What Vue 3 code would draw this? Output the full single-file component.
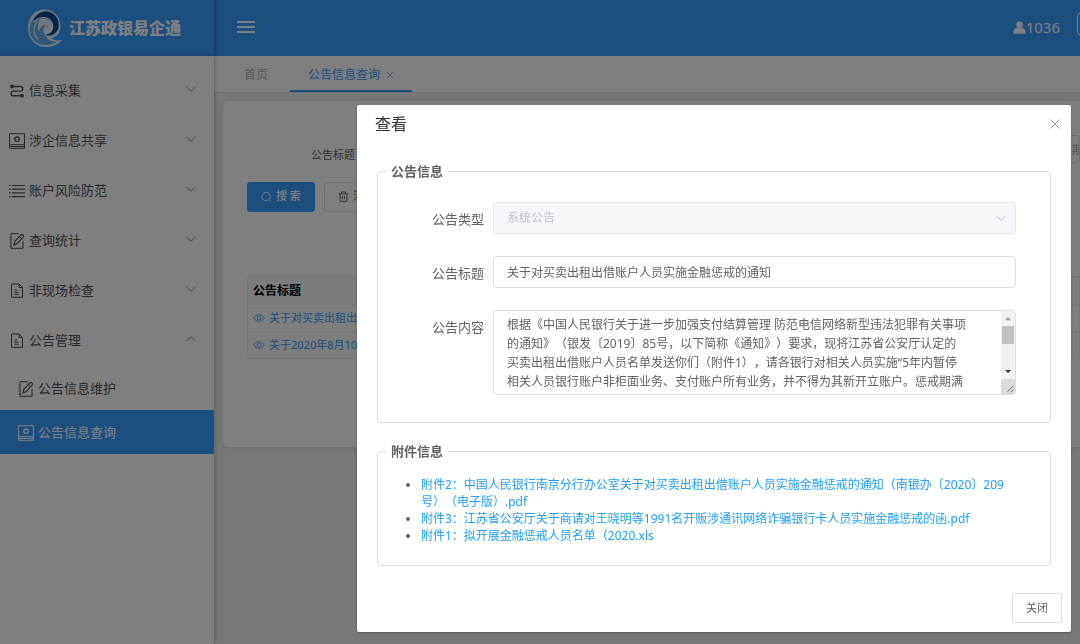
<script setup>
import { ref } from 'vue'

const menu = [
  { text: '信息采集', icon: 'route' },
  { text: '涉企信息共享', icon: 'screen' },
  { text: '账户风险防范', icon: 'list' },
  { text: '查询统计', icon: 'edit' },
  { text: '非现场检查', icon: 'doc' },
  { text: '公告管理', icon: 'doc', open: true },
]
const subMenu = [
  { text: '公告信息维护', icon: 'edit' },
  { text: '公告信息查询', icon: 'screen', active: true },
]
const notices = ['关于对买卖出租出借账户人员实施金融惩戒的通知', '关于2020年8月10日系统升级的通知']

const title = ref('关于对买卖出租出借账户人员实施金融惩戒的通知')
const content = ref(
  [
    '根据《中国人民银行关于进一步加强支付结算管理 防范电信网络新型违法犯罪有关事项',
    '的通知》（银发〔2019〕85号，以下简称《通知》）要求，现将江苏省公安厅认定的',
    '买卖出租出借账户人员名单发送你们（附件1），请各银行对相关人员实施“5年内暂停',
    '相关人员银行账户非柜面业务、支付账户所有业务，并不得为其新开立账户。惩戒期满',
  ].join('\n')
)
const files = [
  '附件2：中国人民银行南京分行办公室关于对买卖出租出借账户人员实施金融惩戒的通知（南银办〔2020〕209\n号）（电子版）.pdf',
  '附件3：江苏省公安厅关于商请对王晓明等1991名开贩涉通讯网络诈骗银行卡人员实施金融惩戒的函.pdf',
  '附件1：拟开展金融惩戒人员名单（2020.xls',
]
</script>

<template>
  <div class="shell">
    <svg class="defs" aria-hidden="true">
      <symbol id="route" viewBox="0 0 16 16">
        <g fill="none" stroke="currentColor" stroke-width="1.4">
          <path d="M4 3.5h7.5a2.3 2.3 0 0 1 0 4.6H4.300a2.300 2.300 0 0 0 0 4.600H12" />
        </g>
        <circle cx="3" cy="3.500" r="1.900" fill="currentColor" />
        <circle cx="13" cy="12.700" r="1.900" fill="currentColor" />
      </symbol>
      <symbol id="screen" viewBox="0 0 16 16">
        <g fill="none" stroke="currentColor">
          <path d="M.5 .7h15v11H.500zM.500 11.700v3.600h15v-3.600M.500 13.500h15" />
          <circle cx="8" cy="6.200" r="2.200" stroke-width="1.300" />
        </g>
      </symbol>
      <symbol id="list" viewBox="0 0 16 16">
        <path d="M3 2.500h13M3 6.200h13M3 9.900h13M3 13.600h13M0 2.500h1.500M0 6.200h1.500M0 9.900h1.500M0 13.600h1.500" stroke="currentColor" stroke-width="1.200" />
      </symbol>
      <symbol id="edit" viewBox="0 0 16 16">
        <g fill="none" stroke="currentColor">
          <path d="M10 .700H2v2M2 4.500v1.500M2 8v1.500M2 11.500v3.800h12V8M.500 4h2.500M.500 7h2.500M.500 10h2.500M.500 13h2.500" />
          <path d="M5 12l.800-3.600 5.800-6.300a1.600 1.600 0 0 1 2.500 2.100L8.200 10.600z" stroke-width="1.200" />
          <path d="M10.300 3.700l2.300 2" />
        </g>
      </symbol>
      <symbol id="doc" viewBox="0 0 16 16">
        <g fill="none" stroke="currentColor">
          <path d="M2.500 1h7.500l3.500 3.500v9.800H2.500zM10 1v3.500h3.500M5.500 7h2.500M5.500 9.200h4M5.500 11.300h4" />
        </g>
      </symbol>
      <symbol id="down" viewBox="0 0 12 12">
        <path d="M1.500 4l4.500 4.300L10.500 4" fill="none" stroke="currentColor" />
      </symbol>
      <symbol id="cross" viewBox="0 0 12 12">
        <path d="M1.500 1.500l9 9M10.500 1.500l-9 9" fill="none" stroke="currentColor" />
      </symbol>
      <symbol id="eye" viewBox="0 0 12 12">
        <g fill="none" stroke="currentColor" stroke-width=".8">
          <path d="M.800 6C3.300 1.500 8.700 1.500 11.200 6 8.700 10.500 3.300 10.500 .800 6z" />
          <circle cx="6" cy="6" r="1.900" />
        </g>
      </symbol>
    </svg>

    <header class="top">
      <div class="brand">
        <svg class="logo" viewBox="0 0 36 40">
          <path d="M17 1.500C7 1.500 1 10 1 20c0 11.500 8 19 18 19 6.500 0 12-2.500 16.500-7-4.500 1-8.500 .500-11-1.500 6.500-2 9.500-7 9-13.500C33 7.500 26 1.500 17 1.500z" fill="#fff" opacity=".85" />
          <path d="M9 8C3.500 13 1.500 20 3.500 26.500 6 34 12.500 37.500 19.500 37c4 0 8-1.200 11-3.200-4 .300-7.500-.800-10-3.300-4-4-5-9.500-2.500-14C15 17 12.500 20 12.500 24c-2.500-4.500-2-10.500 1.500-14z" fill="#62b2ea" />
          <path d="M7 11C11 4 18 1.500 24 4.500c7 3.500 9.500 11.500 6.500 17.500-1.500 3.500-5 5.500-9 5.500-1.500 0-2.500-.500-3-1 4.500-.500 7.500-3.500 7-8-.500-5.500-5.500-8.500-10.500-8-3 .300-5.500 1.500-8 3.500z" fill="#0b488f" />
          <path d="M7 14C11 9.500 17 8.500 21.500 11c5 3 5.500 10.500 1 13.500-2.500 1.500-5.500 .500-5.500-2" fill="none" stroke="#fff" stroke-width="1.300" />
          <path d="M10 14c-4.500 5.500-3.500 13 1 17.500" fill="none" stroke="#d7edfb" stroke-width="1.200" />
          <circle cx="19" cy="18.500" r="1.800" fill="#e8c4a0" />
        </svg>
        <strong class="brand-name">江苏政银易企通</strong>
      </div>
      <button class="burger" aria-label="菜单"><i></i><i></i><i></i></button>
      <div class="account">
        <svg class="user" viewBox="0 0 13 13"><circle cx="6.500" cy="3.700" r="3.300" fill="currentColor" /><path d="M.300 12.800C.300 8.500 2.500 7 4.500 6.600h4c2 .400 4.200 1.900 4.200 6.200z" fill="currentColor" /></svg>
        <span>1036</span>
        <button class="exit" aria-label="退出"></button>
      </div>
    </header>

    <nav class="side">
      <a v-for="(m, i) in menu" :key="i" href="#" class="item">
        <svg class="ico"><use :href="'#' + m.icon" /></svg>
        <span>{{ m.text }}</span>
        <svg class="arrow" :class="{ up: m.open }"><use href="#down" /></svg>
      </a>
      <a v-for="m in subMenu" :key="m.text" href="#" class="item sub" :class="{ active: m.active }">
        <svg class="ico"><use :href="'#' + m.icon" /></svg>
        <span>{{ m.text }}</span>
      </a>
    </nav>

    <main class="main">
      <div class="tabs">
        <a href="#" class="tab">首页</a>
        <a href="#" class="tab on">公告信息查询<svg class="tab-x"><use href="#cross" /></svg></a>
      </div>
      <section class="card">
        <div class="query">
          <label for="q">公告标题</label>
          <input id="q" type="text" class="q-title" />
          <input type="text" class="q-date" placeholder="开始日期" aria-label="开始日期" />
        </div>
        <div class="actions">
          <button class="btn primary">
            <svg class="b-ico" viewBox="0 0 12 12"><path d="M8.800 9.200a4.600 4.600 0 1 0-1 .800M8.800 9.200l2 2" fill="none" stroke="currentColor" /></svg>
            搜 索
          </button>
          <button class="btn">
            <svg class="b-ico" viewBox="0 0 12 12"><path d="M1 3h10M4 3V1h4v2M2.300 3v8.300h7.400V3M4.800 5.300v3.700M7.200 5.300v3.700" fill="none" stroke="currentColor" /></svg>
            清 空
          </button>
        </div>
        <table class="grid">
          <thead><tr><th>公告标题</th></tr></thead>
          <tbody>
            <tr v-for="n in notices" :key="n">
              <td><a href="#"><svg class="eye"><use href="#eye" /></svg>{{ n }}</a></td>
            </tr>
          </tbody>
        </table>
      </section>
    </main>

    <div class="mask">
      <div class="dialog" role="dialog" aria-labelledby="dlg-title">
        <div class="dlg-head">
          <h2 id="dlg-title">查看</h2>
          <button class="close" aria-label="关闭"><svg><use href="#cross" /></svg></button>
        </div>
        <fieldset class="info">
          <legend>公告信息</legend>
          <div class="row">
            <label for="type">公告类型</label>
            <div class="field">
              <select id="type" disabled><option>系统公告</option></select>
              <svg class="sel-arrow"><use href="#down" /></svg>
            </div>
          </div>
          <div class="row">
            <label for="title">公告标题</label>
            <div class="field"><input id="title" v-model="title" type="text" /></div>
          </div>
          <div class="row">
            <label for="content">公告内容</label>
            <div class="field">
              <textarea id="content" v-model="content"></textarea>
              <div class="bar" aria-hidden="true">
                <svg class="tri" viewBox="0 0 15 15"><path d="M4 9.500h7L7.500 6z" fill="#a3a3a3" /></svg>
                <div class="thumb"></div>
                <svg class="tri low" viewBox="0 0 15 15"><path d="M4 6h7L7.500 9.500z" fill="#505050" /></svg>
                <svg class="grip" viewBox="0 0 15 15"><path d="M6.500 13.500l7-7M10.500 13.500l3-3" stroke="#777" fill="none" /></svg>
              </div>
            </div>
          </div>
        </fieldset>
        <fieldset class="attach">
          <legend>附件信息</legend>
          <ul>
            <li v-for="f in files" :key="f"><a href="#">{{ f }}</a></li>
          </ul>
        </fieldset>
        <div class="dlg-foot"><button class="btn">关闭</button></div>
      </div>
    </div>
  </div>
</template>

<style>
body {
  margin: 0;
  overflow: hidden;
}
</style>

<style scoped>
* {
  box-sizing: border-box;
}
.shell {
  display: grid;
  grid-template: 56px 1fr / 214px minmax(0, 1fr);
  min-height: 100vh;
  overflow: hidden;
  background: #eff1f5;
  color: #606266;
  font: 12px/1.5 "Noto Sans", "Noto Sans CJK SC", sans-serif;
  text-spacing-trim: space-all;
}
button, input, select, textarea {
  font: inherit;
  color: inherit;
  text-spacing-trim: inherit;
}
a {
  color: inherit;
  text-decoration: none;
}
.defs {
  position: absolute;
  width: 0;
  height: 0;
}

.top {
  grid-column: 1 / -1;
  display: flex;
  align-items: center;
  overflow: hidden;
  background: #369eff;
  color: #fff;
}
.brand {
  display: flex;
  align-items: center;
  gap: 6px;
  width: 214px;
  height: 56px;
  padding-left: 27px;
  box-shadow: 1px 0 4px rgba(0, 21, 41, 0.35);
}
.logo {
  width: 36px;
  height: 40px;
}
.brand-name {
  font-size: 16px;
  font-weight: 900;
  line-height: 24px;
  white-space: nowrap;
}
.burger {
  display: grid;
  gap: 3px;
  width: 18px;
  margin: 0 0 2px 23px;
  padding: 0;
  border: 0;
  background: none;
}
.burger i {
  height: 2px;
  background: #fff;
}
.account {
  display: flex;
  align-items: center;
  margin: 0 -37px 0 auto;
  padding-bottom: 2px;
  font-size: 15px;
}
.user {
  width: 13px;
  height: 13px;
}
.exit {
  width: 40px;
  height: 24px;
  margin: 0 0 6px 17px;
  border: 1px solid #fff;
  border-radius: 4px;
  background: none;
}

.side {
  z-index: 1;
  padding-top: 10px;
  background: #fff;
  box-shadow: 1px 0 4px rgba(0, 21, 41, 0.25);
  color: #505256;
  font-size: 13px;
}
.item {
  display: flex;
  align-items: center;
  gap: 4px;
  height: 50px;
  padding: 0 17px 0 9px;
}
.ico {
  width: 16px;
  height: 16px;
}
.arrow {
  width: 12px;
  height: 12px;
  margin: 0 0 4px auto;
  color: #909399;
}
.arrow.up {
  transform: scaleY(-1);
}
.sub {
  height: 44px;
  padding-top: 2px;
  padding-left: 18px;
}
.active {
  background: #369eff;
  color: #fff;
}

.tabs {
  display: flex;
  height: 37px;
  padding-left: 12px;
  border-bottom: 1px solid #dcdfe6;
  background: #fff;
}
.tab {
  display: flex;
  align-items: center;
  height: 36px;
  padding: 4px 18px 0;
  border-bottom: 2px solid transparent;
  color: #b0b3b8;
}
.tab.on {
  margin-left: 4px;
  border-color: #369eff;
  color: #369eff;
}
.tab-x {
  width: 8px;
  height: 8px;
  margin-left: 6px;
}
.card {
  margin: 8px 0 0 9px;
  padding: 34px 0 88px 24px;
  border-radius: 5px 0 0 5px;
  background: #fff;
  box-shadow: 0 1px 8px rgba(0, 0, 0, 0.1);
}
.query {
  display: flex;
  align-items: center;
  font-size: 11px;
}
.query label {
  width: 108px;
  padding-top: 12px;
  text-align: right;
}
.query input {
  height: 28px;
  border: 1px solid #dcdfe6;
  border-radius: 3px;
}
.q-title {
  width: 160px;
  margin-left: 10px;
}
.q-date {
  width: 80px;
  margin-left: auto;
  padding: 0 0 0 38px;
  border-right: 0;
}
.q-date::placeholder {
  color: #a8abb2;
}
.actions {
  display: flex;
  gap: 9px;
  margin: 18px 0 64px;
}
.btn {
  display: inline-flex;
  align-items: center;
  justify-content: center;
  gap: 4px;
  height: 30px;
  padding: 0 13px;
  border: 1px solid #dcdfe6;
  border-radius: 3px;
  background: #fff;
  font-size: 11px;
}
.b-ico {
  width: 11px;
  height: 11px;
}
.primary {
  border-color: #369eff;
  background: #369eff;
  color: #fff;
  font-weight: 500;
}
.grid {
  width: 100%;
  border-collapse: collapse;
  border: 1px solid #ebeef5;
}
.grid th, .grid td {
  height: 27px;
  padding: 1px 5px 0;
  border-bottom: 1px solid #ebeef5;
  text-align: left;
  line-height: 18px;
}
.grid th {
  height: 28px;
  background: #f8f8f9;
  color: #000;
  font-size: 12px;
}
.grid td {
  color: #369eff;
  font-size: 11px;
}
.grid td a {
  display: flex;
  align-items: center;
  gap: 4px;
}
.grid tbody tr:nth-child(2) {
  background: #fafafa;
}
.eye {
  width: 12px;
  height: 12px;
}

.mask {
  position: fixed;
  inset: 0;
  z-index: 10;
  padding: 105px 9px 0 357px;
  background: rgba(0, 0, 0, 0.5);
}
.dialog {
  padding: 0 20px 9px;
  border-radius: 2px;
  background: #fff;
  box-shadow: 0 1px 3px rgba(0, 0, 0, 0.3);
}
.dlg-head {
  display: flex;
  align-items: center;
  justify-content: space-between;
  height: 38px;
  margin: 0 -10px 19px -2px;
}
h2 {
  margin: 0;
  color: #303133;
  font-size: 16px;
  font-weight: 400;
  line-height: 24px;
}
.close {
  display: flex;
  padding: 0;
  border: 0;
  background: none;
  color: #909399;
}
.close svg {
  width: 12px;
  height: 12px;
}
fieldset {
  min-width: 0;
  margin: 0;
  border: 1px solid #dcdcdc;
  border-radius: 4px;
}
legend {
  padding: 0 5px;
  font-size: 13px;
  font-weight: 700;
  line-height: 18px;
}
.info {
  display: grid;
  gap: 22px;
  padding: 22px 34px 27px 8px;
}
.row {
  display: flex;
  align-items: flex-start;
  gap: 9px;
}
.row label {
  width: 98px;
  padding-top: 2px;
  font-size: 13px;
  line-height: 30px;
  text-align: right;
}
.field {
  position: relative;
  display: flex;
  flex: 1;
}
.field select, .field input, .field textarea {
  width: 100%;
  height: 32px;
  padding: 0 13px;
  border: 1px solid #dcdfe6;
  border-radius: 4px;
  background: #fff;
  appearance: none;
}
.field select:disabled {
  border-color: #e4e7ed;
  background: #f5f7fa;
  color: #c0c4cc;
  opacity: 1;
}
.sel-arrow {
  position: absolute;
  top: 10px;
  right: 9px;
  width: 12px;
  height: 12px;
  color: #c0c4cc;
}
.field textarea {
  height: 85px;
  padding: 4px 16px 0 13px;
  line-height: 19px;
  resize: none;
  scrollbar-width: none;
}
.bar {
  position: absolute;
  top: 1px;
  right: 1px;
  bottom: 1px;
  display: flex;
  flex-direction: column;
  width: 14px;
  background: #f1f1f1;
}
.tri, .grip {
  width: 14px;
  height: 15px;
}
.thumb {
  height: 18px;
  margin: 0 1px;
  background: #c1c1c1;
}
.low {
  margin-top: auto;
}
.grip {
  background: #dcdcdc;
}
.attach {
  margin-top: 19px;
  padding: 16px 8px 21px;
}
ul {
  margin: 0;
  padding-left: 35px;
  line-height: 17px;
}
li a {
  color: #1e9fff;
  white-space: pre-line;
}
.dlg-foot {
  display: flex;
  justify-content: flex-end;
  margin: 27px -11px 0 0;
}
</style>
